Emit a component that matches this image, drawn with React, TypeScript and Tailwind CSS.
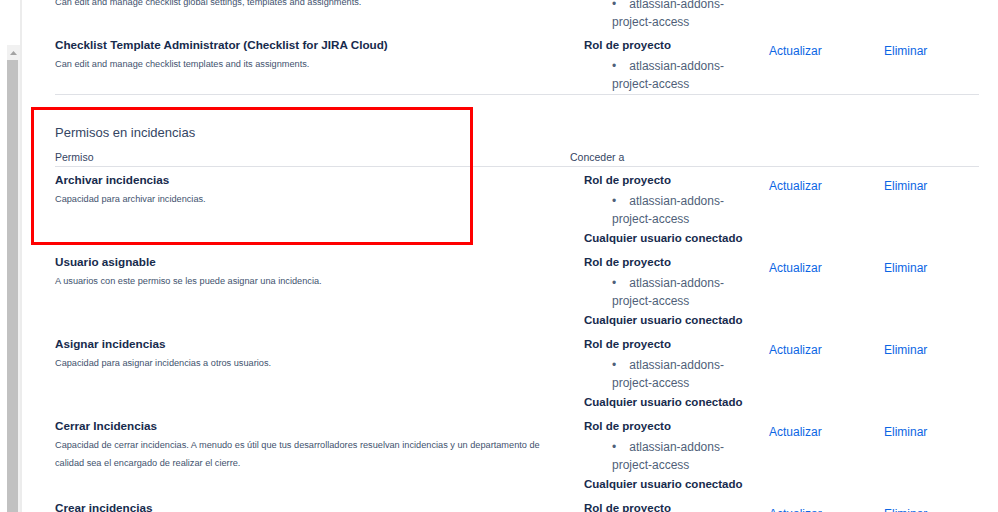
import React from "react";

type Perm = {
  title: string;
  desc: string;
  anyUser?: boolean;
};

const checklistRows: Perm[] = [
  {
    title: "Checklist Global Administrator (Checklist for JIRA Cloud)",
    desc: "Can edit and manage checklist global settings, templates and assignments.",
  },
  {
    title: "Checklist Template Administrator (Checklist for JIRA Cloud)",
    desc: "Can edit and manage checklist templates and its assignments.",
  },
];

const issueRows: Perm[] = [
  { title: "Archivar incidencias", desc: "Capacidad para archivar incidencias.", anyUser: true },
  {
    title: "Usuario asignable",
    desc: "A usuarios con este permiso se les puede asignar una incidencia.",
    anyUser: true,
  },
  {
    title: "Asignar incidencias",
    desc: "Capacidad para asignar incidencias a otros usuarios.",
    anyUser: true,
  },
  {
    title: "Cerrar Incidencias",
    desc: "Capacidad de cerrar incidencias. A menudo es útil que tus desarrolladores resuelvan incidencias y un departamento de calidad sea el encargado de realizar el cierre.",
    anyUser: true,
  },
  { title: "Crear incidencias", desc: "Capacidad para crear incidencias.", anyUser: true },
];

const cols = "grid grid-cols-[515px_199px_115px_95px]";

const PermRow = ({ title, desc, anyUser }: Perm) => (
  <div className={`${cols} pt-[3px] pb-[1px]`}>
    <div className="pr-5">
      <div className="text-[11.7px] font-bold leading-[20px] text-[#172b4d]">{title}</div>
      <div className="text-[9.2px] leading-[18px] text-[#42526e]">{desc}</div>
    </div>
    <div className="px-[14px]">
      <div className="text-[11.5px] font-bold leading-[20px] text-[#172b4d]">Rol de proyecto</div>
      <ul className="mt-[2px] pl-[28px] text-[12px] leading-[18px] text-[#505f79]">
        <li>
          <span className="mr-[13px]">•</span>atlassian-addons-project-access
        </li>
      </ul>
      {anyUser && (
        <div className="text-[11.5px] font-bold leading-[20px] text-[#172b4d]">
          Cualquier usuario conectado
        </div>
      )}
    </div>
    <div className="pt-[3px]">
      <a className="text-[12px] leading-[20px] text-[#0c66e4]">Actualizar</a>
    </div>
    <div className="pt-[3px]">
      <a className="text-[12px] leading-[20px] text-[#0c66e4]">Eliminar</a>
    </div>
  </div>
);

export default function App() {
  return (
    <div className="relative flex h-[512px] w-[998px] overflow-hidden bg-white font-['Liberation_Sans',Arial,sans-serif]">
      {/* left scroll gutter */}
      <div className="flex h-full w-[22px] shrink-0 flex-col border-r-2 border-[#ececec] pl-[7px] pt-[45px]">
        <div className="flex w-[13px] flex-1 flex-col bg-[#f1f1f1]">
          <div className="flex h-[15px] items-center justify-center">
            <svg width="7" height="4" viewBox="0 0 7 4">
              <path d="M0 4 L3.5 0 L7 4 Z" fill="#a3a3a3" />
            </svg>
          </div>
          <div className="w-[11px] flex-1 bg-[#c1c1c1]" />
        </div>
      </div>

      <div className="w-[924px] shrink-0 pl-[33px]">
        <div className="-mt-[30px] w-[924px]">
          <div className="border-b border-[#dfe1e6]">
            {checklistRows.map((r) => (
              <PermRow key={r.title} {...r} />
            ))}
          </div>

          <h3 className="mt-[28px] text-[13px] leading-[20px] text-[#344563]">Permisos en incidencias</h3>
          <div className={`${cols} border-b border-[#dfe1e6] pb-[2px] pt-[7px] text-[10.5px] leading-[14px] text-[#344563]`}>
            <div>Permiso</div>
            <div>Conceder a</div>
            <div />
            <div />
          </div>
          {issueRows.map((r) => (
            <PermRow key={r.title} {...r} />
          ))}
        </div>
      </div>

      {/* highlight box */}
      <div className="absolute left-[31px] top-[107px] h-[138px] w-[442px] border-[3px] border-[#ff0000]" />
    </div>
  );
}
